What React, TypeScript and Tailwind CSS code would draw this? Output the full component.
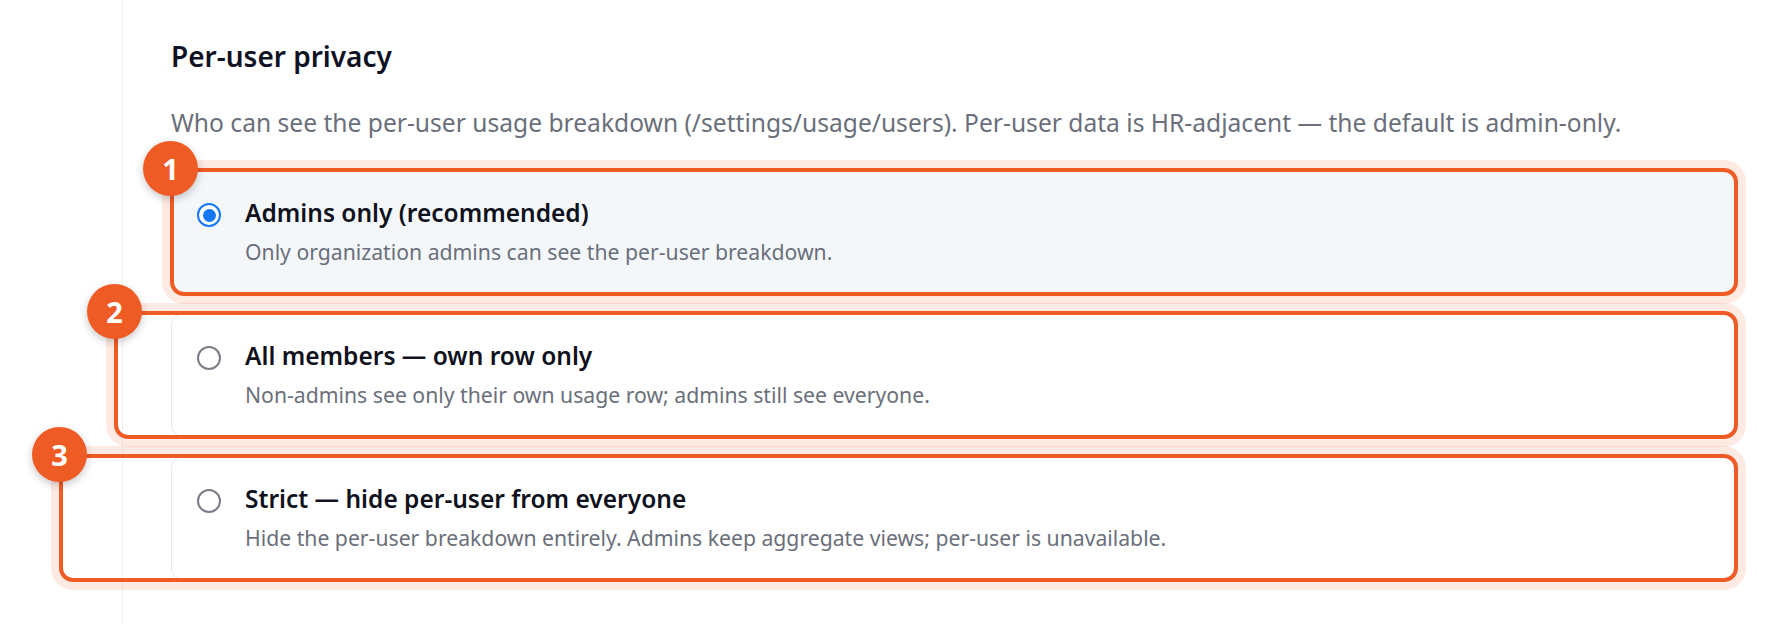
import React from 'react';

type Option = {
  id: string;
  title: string;
  description: string;
  offset: string;
};

const options: Option[] = [
  {
    id: 'admins',
    title: 'Admins only (recommended)',
    description: 'Only organization admins can see the per-user breakdown.',
    offset: '-left-[2px]',
  },
  {
    id: 'members',
    title: 'All members — own row only',
    description: 'Non-admins see only their own usage row; admins still see everyone.',
    offset: '-left-[58px]',
  },
  {
    id: 'strict',
    title: 'Strict — hide per-user from everyone',
    description: 'Hide the per-user breakdown entirely. Admins keep aggregate views; per-user is unavailable.',
    offset: '-left-[113px]',
  },
];

const Radio: React.FC<{ checked: boolean }> = ({ checked }) =>
  checked ? (
    <span className="mt-[5px] flex h-[24px] w-[24px] shrink-0 items-center justify-center rounded-full border-[2.5px] border-[#1677f6] bg-white">
      <span className="h-[13px] w-[13px] rounded-full bg-[#1677f6]" />
    </span>
  ) : (
    <span className="mt-[5px] h-[24px] w-[24px] shrink-0 rounded-full border-[2px] border-[#7a7d85] bg-white" />
  );

export default function App() {
  const selected = 'admins';

  return (
    <div className="flex h-[624px] w-[1780px] overflow-hidden bg-white font-['Noto_Sans',sans-serif]">
      <div className="w-[123px] shrink-0 border-r border-[#eff0f2]" />

      <div className="flex w-[1566px] flex-col pl-[48px] pt-[38px]">
        <h2 className="text-[28px] font-semibold leading-[36px] text-[#0e1222]">Per-user privacy</h2>
        <p className="mt-[35px] text-[24.6px] leading-[28px] text-[#6a6f7b]">
          Who can see the per-user usage breakdown (/settings/usage/users). Per-user data is HR-adjacent — the default is admin-only.
        </p>

        <div className="mt-[33px] flex w-[1566px] flex-col gap-[19px]">
          {options.map((o, i) => {
            const isSelected = o.id === selected;
            return (
              <div
                key={o.id}
                className={`relative flex h-[124px] items-start gap-[24px] rounded-[12px] border pl-[25px] pt-[27px] ${
                  isSelected ? 'border-[#1677f6] bg-[#f4f7fa]' : 'border-[#e6e8eb] bg-white'
                }`}
              >
                <Radio checked={isSelected} />
                <div className="flex flex-col">
                  <span className="text-[24.5px] font-semibold leading-[29px] text-[#0f121c]">{o.title}</span>
                  <span className="mt-[13px] text-[21.2px] leading-[24px] text-[#6a6f7b]">{o.description}</span>
                </div>

                {/* annotation overlay */}
                <div
                  className={`pointer-events-none absolute -top-[3px] -bottom-[3px] -right-[2px] ${o.offset} rounded-[14px] border-[4px] border-[#ef5b25] shadow-[0_0_0_8px_rgba(239,91,37,0.13)]`}
                >
                  <span className="absolute -left-[31px] -top-[31px] flex h-[55px] w-[55px] items-center justify-center rounded-full bg-[#ef5b25] text-[29px] font-bold text-white shadow-[0_3px_8px_rgba(0,0,0,0.22)]">
                    {i + 1}
                  </span>
                </div>
              </div>
            );
          })}
        </div>
      </div>
    </div>
  );
}
